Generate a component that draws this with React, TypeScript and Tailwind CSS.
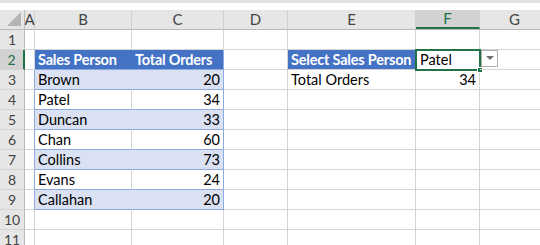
const cols = [
  { key: "A", w: "w-[10px]" },
  { key: "B", w: "w-[97px]" },
  { key: "C", w: "w-[92px]" },
  { key: "D", w: "w-[64px]" },
  { key: "E", w: "w-[128px]" },
  { key: "F", w: "w-[64px]" },
  { key: "G", w: "w-[70px]" },
];

const people = [
  ["Brown", "20"],
  ["Patel", "34"],
  ["Duncan", "33"],
  ["Chan", "60"],
  ["Collins", "73"],
  ["Evans", "24"],
  ["Callahan", "20"],
];

function Cell({ w, className = "", children }: { w: string; className?: string; children?: React.ReactNode }) {
  return (
    <div className={`${w} h-[20px] shrink-0 border-r border-b border-[#d4d4d4] flex items-end leading-[18px] px-[3px] overflow-visible whitespace-nowrap ${className}`}>
      {children}
    </div>
  );
}

function RowHead({ n, active }: { n: number; active?: boolean }) {
  return (
    <div
      className={`w-[25px] h-[20px] shrink-0 flex items-center justify-center border-b border-[#d4d4d4] text-[14px] ${
        active ? "bg-[#d2d2d2] text-[#217346] border-r-2 border-r-[#217346]" : "bg-[#e6e6e6] text-[#444] border-r border-r-[#bababa]"
      }`}
    >
      {n}
    </div>
  );
}

export default function App() {
  return (
    <div className="w-[540px] h-[245px] bg-white overflow-hidden text-[14.5px] text-black" style={{ fontFamily: "Lato, 'Liberation Sans', sans-serif" }}>
      <div className="h-[10px] border-t-[3px] border-[#e1e1e1] bg-white" />
      {/* column headers */}
      <div className="flex h-[20px] border-b border-[#bababa] bg-[#e6e6e6]">
        <div className="w-[25px] shrink-0 border-r border-[#bababa] relative">
          <svg className="absolute right-[3px] bottom-[3px]" width="14" height="14" viewBox="0 0 14 14">
            <polygon points="14,0 14,14 0,14" fill="#b4b4b4" />
          </svg>
        </div>
        {cols.map((c) => (
          <div
            key={c.key}
            className={`${c.w} shrink-0 flex items-center justify-center border-r border-[#d0d0d0] text-[15px] ${
              c.key === "F" ? "bg-[#d2d2d2] text-[#217346] border-b-2 border-b-[#217346]" : "text-[#444]"
            }`}
          >
            {c.key}
          </div>
        ))}
      </div>

      {/* row 1 */}
      <div className="flex">
        <RowHead n={1} />
        {cols.map((c) => (
          <Cell key={c.key} w={c.w} />
        ))}
      </div>

      {/* row 2 */}
      <div className="flex">
        <RowHead n={2} active />
        <Cell w="w-[10px]" />
        <Cell w="w-[97px]" className="bg-[#4472c4] text-white font-bold tracking-[-0.2px] border-r-[#4472c4] border-b-[#8ea9db]">Sales Person</Cell>
        <Cell w="w-[92px]" className="bg-[#4472c4] text-white font-bold tracking-[-0.2px] border-r-[#8ea9db] border-b-[#8ea9db]">Total Orders</Cell>
        <Cell w="w-[64px]" />
        <Cell w="w-[128px]" className="bg-[#4472c4] text-white font-bold tracking-[-0.2px]">Select Sales Person</Cell>
        <div className="w-[64px] h-[20px] shrink-0 border-b border-r border-[#d4d4d4] relative">
          <div className="absolute left-[-1px] top-[-1px] w-[66px] h-[22px] border-2 border-[#217346] flex items-end leading-[18px] px-[3px]">Patel</div>
          <div className="absolute right-[-4px] bottom-[-4px] w-[6px] h-[6px] bg-[#217346] border border-white" />
        </div>
        <div className="w-[70px] h-[20px] shrink-0 border-b border-r border-[#d4d4d4] relative">
          <div className="absolute left-[1px] top-0 w-[17px] h-[17px] bg-white border border-[#b0b0b0] flex items-center justify-center">
            <svg width="8" height="5" viewBox="0 0 8 5">
              <polygon points="0,0 8,0 4,4" fill="#707070" />
            </svg>
          </div>
        </div>
      </div>

      {/* rows 3-9 */}
      {people.map(([name, orders], i) => {
        const band = i % 2 === 0;
        return (
          <div key={name} className="flex">
            <RowHead n={i + 3} />
            <Cell w="w-[10px]" className="border-r-[#8ea9db]" />
            <Cell w="w-[97px]" className={`border-b-[#8ea9db] ${band ? "bg-[#d9e1f2] border-r-[#d9e1f2]" : ""}`}>{name}</Cell>
            <Cell w="w-[92px]" className={`justify-end border-r-[#8ea9db] border-b-[#8ea9db] ${band ? "bg-[#d9e1f2]" : ""}`}>{orders}</Cell>
            <Cell w="w-[64px]" />
            <Cell w="w-[128px]">{i === 0 ? "Total Orders" : ""}</Cell>
            <Cell w="w-[64px]" className="justify-end">{i === 0 ? "34" : ""}</Cell>
            <Cell w="w-[70px]" />
          </div>
        );
      })}

      {/* rows 10-11 */}
      {[10, 11].map((n) => (
        <div key={n} className="flex">
          <RowHead n={n} />
          {cols.map((c) => (
            <Cell key={c.key} w={c.w} />
          ))}
        </div>
      ))}
    </div>
  );
}
